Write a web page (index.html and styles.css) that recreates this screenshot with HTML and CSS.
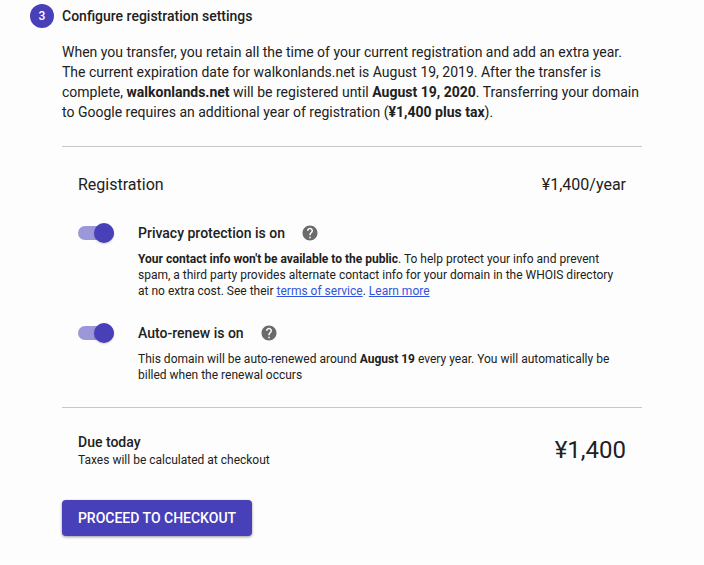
FILE: index.html
```html
<!DOCTYPE html>
<html lang="en">
<head>
  <meta charset="UTF-8">
  <meta name="viewport" content="width=device-width, initial-scale=1.0">
  <title>Transfer domain</title>
  <link rel="stylesheet" href="styles.css">
</head>
<body>

<div class="step">
  <div class="step-number">3</div>
  <div class="step-body">
    <h2 class="step-title">Configure registration settings</h2>
    <p class="intro">When you transfer, you retain all the time of your current registration and add an extra year.<br>
      The current expiration date for walkonlands.net is August 19, 2019. After the transfer is<br>
      complete, <b>walkonlands.net</b> will be registered until <b>August 19, 2020</b>. Transferring your domain<br>
      to Google requires an additional year of registration (<b>¥1,400 plus tax</b>).</p>

    <div class="settings">
      <div class="price-row">
        <span>Registration</span>
        <span>¥1,400/year</span>
      </div>

      <div class="option">
        <button class="toggle" role="switch" aria-checked="true"></button>
        <div class="option-text">
          <h3>Privacy protection is on
            <svg class="help" viewBox="0 0 24 24"><path d="M12 2C6.48 2 2 6.48 2 12s4.480 10 10 10 10-4.480 10-10S17.520 2 12 2zm1 17h-2v-2h2v2zm2.070-7.750l-.9.920C13.450 12.900 13 13.500 13 15h-2v-.5c0-1.100.45-2.100 1.170-2.830l1.240-1.260c.37-.36.590-.86.590-1.410 0-1.100-.9-2-2-2s-2 .9-2 2H8c0-2.210 1.790-4 4-4s4 1.790 4 4c0 .88-.36 1.680-.93 2.250z"/></svg>
          </h3>
          <p><b>Your contact info won't be available to the public</b>. To help protect your info and prevent<br>
            spam, a third party provides alternate contact info for your domain in the WHOIS directory<br>
            at no extra cost. See their <a href="#">terms of service</a>. <a href="#">Learn more</a></p>
        </div>
      </div>

      <div class="option">
        <button class="toggle" role="switch" aria-checked="true"></button>
        <div class="option-text">
          <h3>Auto-renew is on
            <svg class="help" viewBox="0 0 24 24"><path d="M12 2C6.48 2 2 6.48 2 12s4.480 10 10 10 10-4.480 10-10S17.520 2 12 2zm1 17h-2v-2h2v2zm2.070-7.750l-.9.920C13.450 12.900 13 13.500 13 15h-2v-.5c0-1.100.45-2.100 1.170-2.830l1.240-1.260c.37-.36.590-.86.590-1.410 0-1.100-.9-2-2-2s-2 .9-2 2H8c0-2.210 1.790-4 4-4s4 1.790 4 4c0 .88-.36 1.680-.93 2.250z"/></svg>
          </h3>
          <p>This domain will be auto-renewed around <b>August 19</b> every year. You will automatically be<br>
            billed when the renewal occurs</p>
        </div>
      </div>
    </div>

    <div class="total">
      <div>
        <h3>Due today</h3>
        <p>Taxes will be calculated at checkout</p>
      </div>
      <span class="amount">¥1,400</span>
    </div>

    <button class="checkout">PROCEED TO CHECKOUT</button>
  </div>
</div>

</body>
</html>
```

FILE: styles.css
```css
body {
  margin: 0;
  background-color: #fdfdfd;
  color: #212121;
  font-family: Roboto, sans-serif;
  font-size: 14px;
  line-height: 20px;
}
h2, h3, p {
  margin: 0;
}
b {
  font-weight: 700;
}
.step {
  display: flex;
  gap: 8px;
  padding: 4px 0 20px 30px;
}
.step-number {
  width: 24px;
  height: 24px;
  border-radius: 50%;
  background-color: #4840b8;
  color: #fff;
  font-size: 12px;
  font-weight: 500;
  line-height: 24px;
  text-align: center;
}
.step-body {
  width: 580px;
  white-space: nowrap;
}
.step-title {
  font-size: 14px;
  font-weight: 500;
  line-height: 24px;
}
.intro {
  margin-top: 14px;
}
.settings {
  margin-top: 24px;
  padding: 26px 16px 24px;
  border-top: 1px solid #c8c8c8;
  border-bottom: 1px solid #c8c8c8;
}
.price-row {
  display: flex;
  justify-content: space-between;
  font-size: 16px;
  line-height: 24px;
}
.option {
  display: flex;
  gap: 24px;
  margin-top: 24px;
}
.option + .option {
  margin-top: 22px;
}
.toggle {
  position: relative;
  width: 36px;
  height: 14px;
  margin-top: 5px;
  padding: 0;
  border: 0;
  border-radius: 7px;
  background-color: #9b97d8;
}
.toggle::after {
  content: "";
  position: absolute;
  top: -3px;
  right: 0;
  width: 20px;
  height: 20px;
  border-radius: 50%;
  background-color: #4840b8;
  box-shadow: 0 1px 2px rgba(0, 0, 0, 0.2);
}
.option-text h3 {
  display: flex;
  align-items: center;
  gap: 16px;
  font-size: 14px;
  font-weight: 500;
  line-height: 24px;
}
.help {
  width: 18px;
  height: 18px;
  fill: #6b6b6b;
}
.option-text p {
  margin-top: 6px;
  font-size: 12px;
  line-height: 16px;
}
.option-text a {
  color: #3353db;
}
.total {
  display: flex;
  justify-content: space-between;
  align-items: center;
  padding: 24px 16px 32px;
}
.total h3 {
  font-size: 14px;
  font-weight: 500;
  line-height: 20px;
}
.total p {
  font-size: 12px;
  line-height: 16px;
}
.amount {
  font-size: 24px;
  line-height: 32px;
}
.checkout {
  width: 190px;
  height: 36px;
  padding: 0;
  border: 0;
  border-radius: 4px;
  background-color: #4840b8;
  box-shadow: 0 1px 3px rgba(0, 0, 0, 0.4);
  color: #fff;
  font-family: inherit;
  font-size: 14px;
  font-weight: 500;
}
```
